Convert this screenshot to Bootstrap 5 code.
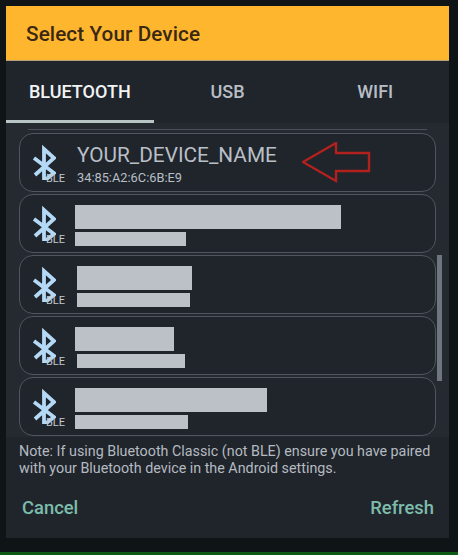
<!DOCTYPE html>
<html lang="en">
<head>
<meta charset="utf-8">
<title>Select Your Device</title>
<link href="https://cdn.jsdelivr.net/npm/bootstrap@5.3.0/dist/css/bootstrap.min.css" rel="stylesheet">
<style>
html,body{height:555px;overflow:hidden}
body{background:#0f1417;font-family:Roboto,"Liberation Sans",sans-serif;color:#c3c8ce}
.screen{height:555px;padding:6px 9px 0 6px;border-bottom:3px solid #0c5a14}
.dlg{height:532px;background:#1f252b;position:relative}
.dlg-head{height:55px;background:#feb62e;border-bottom:1px solid #b7a27f;padding:3px 0 0 20px;font-size:20.7px;font-weight:500;color:#3a2813;letter-spacing:.1px}
.tabbar{height:62px}
.tabbar .nav-link{color:#b9bec6;font-size:18px;font-weight:500;padding:0;height:62px;line-height:62px;border-radius:0;border-bottom:3px solid transparent}
.tabbar .nav-link.active{color:#f2f3f5;border-bottom-color:#b9c4c4}
.devlist{height:314px;overflow:hidden;background:#252a30;padding:6px 13px 0;position:relative}
.prev-edge{height:1px;background:#4a5058;margin:0 9px 3px}
.dev{height:59px;margin-bottom:2px;border:1px solid #50565e;border-radius:14px;background:#1f252b;position:relative;padding-left:55px;overflow:hidden}
.dev.offs{padding-left:57px}
.bt-ic{position:absolute;left:12px;top:10px;width:24px;height:36px}
.ble{position:absolute;left:26px;top:38px;font-size:11px;line-height:13px;color:#c3c8ce}
.dname{font-size:20.8px;line-height:24px;color:#b9bfc7;margin-top:9px}
.dmac{font-size:12.8px;line-height:14px;color:#b9bfc7;margin-top:4px}
.rd{background:#bcc1c8}
.rd-a{height:24px;margin-top:10px}
.rd-b{height:14px;margin-top:3px}
.rd-shift{margin-left:2px}
.w266{width:266px}.w115{width:115px}.w99{width:99px}.w192{width:192px}
.w111{width:111px}.w113{width:113px}.w108{width:108px}
.sbar{position:absolute;right:7px;top:132px;width:5px;height:126px;background:#6f757e}
.arrow{position:absolute;left:296px;top:136px;width:80px;height:50px}
.note{font-size:14.3px;line-height:17px;color:#b5bac1;padding:6px 13px 0;margin:0}
.acts{padding:20px 15px 0 16px}
.acts .btn{font-size:18.4px;font-weight:500;color:#7dbcab;padding:0;border:0;line-height:22px;background:none}
</style>
</head>
<body>
<div class="screen">
  <div class="dlg">
    <div class="dlg-head d-flex align-items-center">Select Your Device</div>
    <ul class="nav nav-justified tabbar">
      <li class="nav-item"><a class="nav-link active" href="#">BLUETOOTH</a></li>
      <li class="nav-item"><a class="nav-link" href="#">USB</a></li>
      <li class="nav-item"><a class="nav-link" href="#">WIFI</a></li>
    </ul>
    <div class="devlist">
      <div class="prev-edge"></div>
      <div class="dev offs">
        <svg class="bt-ic" viewBox="0 0 24 36"><path d="M2 14 L22 29 L12 37 L12 5 L22 14 L3 31" fill="none" stroke="#b4d9f6" stroke-width="3.8"/></svg>
        <span class="ble">BLE</span>
        <div class="dname">YOUR_DEVICE_NAME</div>
        <div class="dmac">34:85:A2:6C:6B:E9</div>
      </div>
      <div class="dev">
        <svg class="bt-ic" viewBox="0 0 24 36"><path d="M2 14 L22 29 L12 37 L12 5 L22 14 L3 31" fill="none" stroke="#b4d9f6" stroke-width="3.8"/></svg>
        <span class="ble">BLE</span>
        <div class="rd rd-a w266"></div>
        <div class="rd rd-b w111"></div>
      </div>
      <div class="dev offs">
        <svg class="bt-ic" viewBox="0 0 24 36"><path d="M2 14 L22 29 L12 37 L12 5 L22 14 L3 31" fill="none" stroke="#b4d9f6" stroke-width="3.8"/></svg>
        <span class="ble">BLE</span>
        <div class="rd rd-a w115"></div>
        <div class="rd rd-b w113"></div>
      </div>
      <div class="dev">
        <svg class="bt-ic" viewBox="0 0 24 36"><path d="M2 14 L22 29 L12 37 L12 5 L22 14 L3 31" fill="none" stroke="#b4d9f6" stroke-width="3.8"/></svg>
        <span class="ble">BLE</span>
        <div class="rd rd-a w99"></div>
        <div class="rd rd-b w108 rd-shift"></div>
      </div>
      <div class="dev">
        <svg class="bt-ic" viewBox="0 0 24 36"><path d="M2 14 L22 29 L12 37 L12 5 L22 14 L3 31" fill="none" stroke="#b4d9f6" stroke-width="3.8"/></svg>
        <span class="ble">BLE</span>
        <div class="rd rd-a w192"></div>
        <div class="rd rd-b w113"></div>
      </div>
      <div class="sbar"></div>
    </div>
    <p class="note">Note: If using Bluetooth Classic (not BLE) ensure you have paired with your Bluetooth device in the Android settings.</p>
    <div class="acts d-flex justify-content-between">
      <button class="btn" type="button">Cancel</button>
      <button class="btn" type="button">Refresh</button>
    </div>
    <svg class="arrow" viewBox="0 0 80 50"><path d="M1 20 L34 1 L34 11 L67 11 L67 29 L34 29 L34 39 Z" fill="none" stroke="#b3211f" stroke-width="2.4"/></svg>
  </div>
</div>
</body>
</html>
